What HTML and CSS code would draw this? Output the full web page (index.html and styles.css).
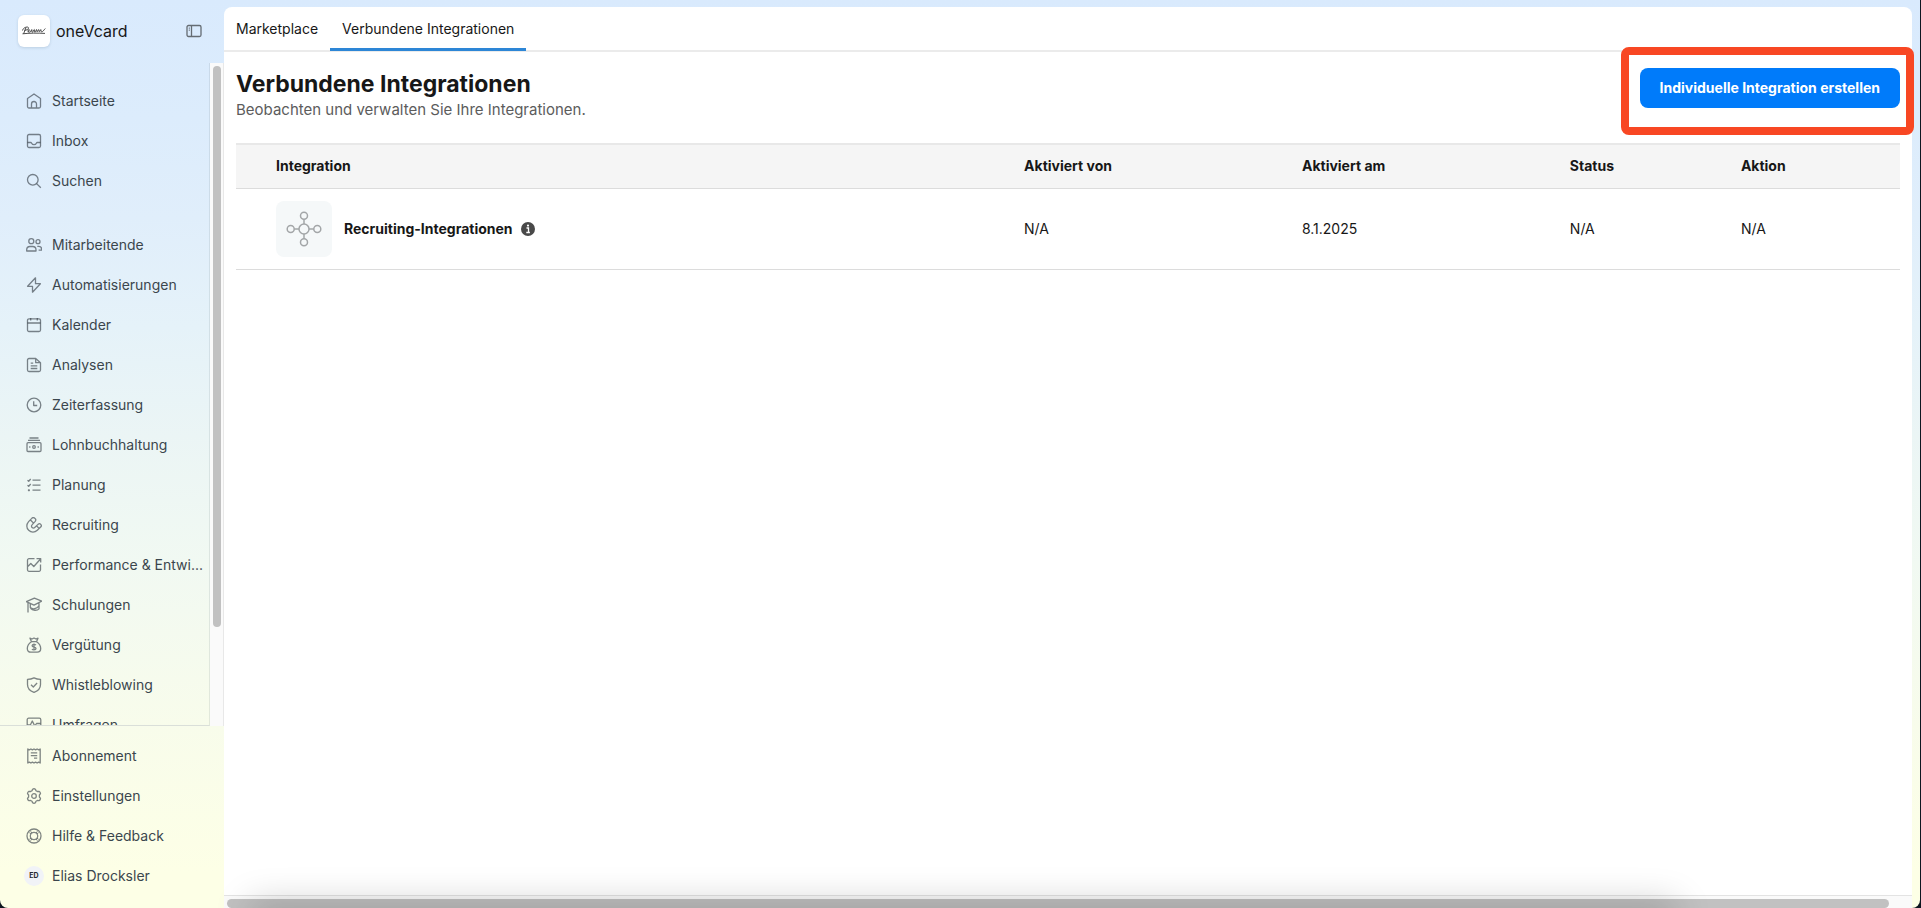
FILE: index.html
```html
<!DOCTYPE html>
<html lang="de">
<head>
<meta charset="utf-8">
<meta name="viewport" content="width=device-width, initial-scale=1">
<title>Verbundene Integrationen</title>
<link rel="stylesheet" href="styles.css">
</head>
<body>
<div class="app">
  <aside class="sidebar">
    <div class="brand">
      <span class="brand-logo">
        <svg viewBox="0 0 32 32" width="32" height="32" aria-hidden="true"><path d="M4.500 15.500c.5-3 5.500-4.500 6-2.700.3 1.400-2 2.400-4 2.600M8 12.500l-2.300 6M9.800 16.500c1.800-.6 2-2 1.100-2s-1.600 2.700.3 2.700 2-2.700 2.700-2.700c.6 0-.8 2.700.4 2.700s1.200-2.700 2-2.700-.6 2.700.6 2.700 1-2.700 1.600-2.700.1 2.300.7 2.300.9-2.300 1.500-2.300.1 2.300.7 2.300.9-2.300 1.500-2.300-.5 2.300.8 2.300 1.900-1.500 3.600-3.300M4.500 18.800c7-.8 15-.8 22.500-.4" fill="none" stroke="#222" stroke-width=".8"/></svg>
      </span>
      <span class="brand-name">oneVcard</span>
      <button class="collapse" type="button" aria-label="Seitenleiste einklappen">
        <svg viewBox="0 0 16 16" width="16" height="16"><rect x="1" y="2.500" width="14" height="11" rx="1.500"/><path d="M5.500 2.500v11M2.800 5.200h1M2.800 7.200h1"/></svg>
      </button>
    </div>
    <div class="scroll-area">
      <nav class="nav" aria-label="Hauptnavigation">
        <a class="item" href="#"><svg class="icon" viewBox="0 0 16 16"><path d="M1.500 5.500L8 1l6.500 4.500v8a1.500 1.500 0 0 1-1.500 1.500H3a1.500 1.500 0 0 1-1.500-1.500zM5.500 15v-4a2.500 2.500 0 0 1 5 0v4"/></svg><span>Startseite</span></a>
        <a class="item" href="#"><svg class="icon" viewBox="0 0 16 16"><rect x="1.500" y="1.500" width="13" height="13" rx="1.500"/><path d="M1.500 9.500h3.300c.4 0 .6.300.8.700.5 1 1.300 1.500 2.400 1.500s1.900-.5 2.400-1.500c.2-.4.4-.7.800-.7h3.300"/></svg><span>Inbox</span></a>
        <a class="item" href="#"><svg class="icon" viewBox="0 0 16 16"><circle cx="6.800" cy="6.800" r="5.300"/><path d="M10.600 10.600l4.200 4.200"/></svg><span>Suchen</span></a>
        <a class="item item-group" href="#"><svg class="icon" viewBox="0 0 16 16"><circle cx="5.300" cy="4.200" r="2.500"/><circle cx="12" cy="4.700" r="2"/><path d="M.7 14v-1.300c0-2 1.500-3.200 3.300-3.200h2.700c1.800 0 3.300 1.200 3.300 3.200V14zM11.300 9.300h1.500c1.600 0 2.800 1.100 2.800 2.900v1h-3"/></svg><span>Mitarbeitende</span></a>
        <a class="item" href="#"><svg class="icon" viewBox="0 0 16 16"><path d="M9.500.8L1.600 9.300h4.900v5.900l7.900-8.500H9.500z"/></svg><span>Automatisierungen</span></a>
        <a class="item" href="#"><svg class="icon" viewBox="0 0 16 16"><rect x="1.500" y="1.800" width="13" height="12.700" rx="1.500"/><path d="M1.500 6h13M4.700 1v2.500M11.300 1v2.500"/></svg><span>Kalender</span></a>
        <a class="item" href="#"><svg class="icon" viewBox="0 0 16 16"><path d="M9.700 1.500H3A1.500 1.500 0 0 0 1.500 3v10A1.500 1.500 0 0 0 3 14.500h10a1.500 1.500 0 0 0 1.500-1.500V5.700zM9.700 1.500v4.200h4.800M4.700 6.200h2.500M4.700 8.800h6.600M4.700 11.500h6.600"/></svg><span>Analysen</span></a>
        <a class="item" href="#"><svg class="icon" viewBox="0 0 16 16"><circle cx="8" cy="8" r="6.800"/><path d="M7.700 4.200v4.300h3.500"/></svg><span>Zeiterfassung</span></a>
        <a class="item" href="#"><svg class="icon" viewBox="0 0 16 16"><rect x="1" y="5.700" width="14" height="8.800" rx="1"/><path d="M2 3.300h12M3.500 1h9"/><circle cx="8" cy="10" r="1.300"/><path d="M3.800 9.300v1.500M12.200 9.300v1.500"/></svg><span>Lohnbuchhaltung</span></a>
        <a class="item" href="#"><svg class="icon" viewBox="0 0 16 16"><path d="M6.500 3.200h8M6.500 8.200h8M6.500 13.200h8M1.500 3.200l1.200 1.100 2-2.300M1.500 8.200l1.200 1.100 2-2.300M2.500 12.900h.8v.6h-.8z"/></svg><span>Planung</span></a>
        <a class="item" href="#"><svg class="icon" viewBox="0 0 16 16"><path d="M5.500 1.600L2.600 4.600C.2 7.300.3 11.100 2.700 13.300s6 2.300 8.600-.1l3.600-3.400a1.900 1.900 0 0 0-2.600-2.700L9 10.300c-.9.900-2.100.9-2.900.2s-.8-2 .1-2.900L9.200 4.400a2 2 0 0 0-3.700-2.800zM4.700 3.200l2.600 2.700M10.700 9l2.400 2.400"/></svg><span>Recruiting</span></a>
        <a class="item" href="#"><svg class="icon" viewBox="0 0 16 16"><path d="M8.500 1.700H3a1.500 1.500 0 0 0-1.500 1.500v9.600A1.500 1.500 0 0 0 3 14.300h10a1.500 1.500 0 0 0 1.500-1.500V7.500M1.500 9.800l3.300-3.300 3 3L14.500 2M10.500 1.600h4.200v4"/></svg><span>Performance &amp; Entwi...</span></a>
        <a class="item" href="#"><svg class="icon" viewBox="0 0 16 16"><path d="M.3 4.700L8.400 1.200l7.400 3-7.800 4zM13 6.200v5.600c-1.700 2-6.500 2-8.500-.5M2 5.500V15.500M4.300 7v3.500c2.200 2.200 6.500 1.500 8.500-1.500"/></svg><span>Schulungen</span></a>
        <a class="item" href="#"><svg class="icon" viewBox="0 0 16 16"><path d="M5.500 4.700L4 1.200l2 .8 2-1 2 1 2-.8-1.500 3.500zM5.500 4.700C3 6.300 1.300 8.700 1.300 11.500c0 2.300 1.300 3.700 3.500 3.700h6.400c2.200 0 3.500-1.400 3.500-3.700 0-2.800-1.700-5.200-4.200-6.800"/><path d="M9.900 8.200c-.4-.6-1-.8-1.900-.8-1.100 0-1.900.5-1.900 1.400 0 2 3.900.7 3.900 2.700 0 .9-.8 1.400-2 1.400-.9 0-1.600-.3-2-.9M8 6.600v7"/></svg><span>Vergütung</span></a>
        <a class="item" href="#"><svg class="icon" viewBox="0 0 16 16"><path d="M8 .8c2 1 4.300 1.500 6.500 1.500v5.200c0 3.800-2.700 6.600-6.500 7.900C4.200 14.100 1.500 11.300 1.500 7.500V2.300C3.700 2.300 6 1.800 8 .8z"/><path d="M5 7.800L7.300 10l3.800-4"/></svg><span>Whistleblowing</span></a>
        <a class="item" href="#"><svg class="icon" viewBox="0 0 16 16"><rect x="1.200" y="1.200" width="13.600" height="12" rx="1.500"/><path d="M1.500 8h2.800l2-4 2.500 5 1.700-2.500h4M5 15h6"/></svg><span>Umfragen</span></a>
      </nav>
      <div class="v-track"><div class="v-thumb"></div></div>
    </div>
    <nav class="account" aria-label="Konto">
      <a class="item" href="#"><svg class="icon" viewBox="0 0 16 16"><path d="M1.800 1l1.500.9L4.900 1l1.500.9L8 1l1.600.9 1.500-.9 1.600.9L14.200 1v14l-1.500-.9-1.600.9-1.500-.9L8 15l-1.600-.9-1.500.9-1.600-.9-1.500.9zM4.800 4.900h6.400M4.800 7.600h6.400M8 10.200h3.200"/></svg><span>Abonnement</span></a>
      <a class="item" href="#"><svg class="icon" viewBox="0 0 16 16"><path d="M6.600 1.200Q8 .3 9.400 1.200l.6 1.600 1.300.7 1.800-.2q1.300.7 1.400 2.300L13.400 7v2l1.100 1.400q-.1 1.600-1.400 2.300l-1.800-.2-1.300.7-.6 1.600q-1.400.9-2.800 0L6 13.200l-1.300-.7-1.800.2q-1.300-.7-1.400-2.300L2.600 9V7L1.500 5.600q.1-1.600 1.400-2.300l1.800.2L6 2.800z"/><circle cx="8" cy="8" r="2.300"/></svg><span>Einstellungen</span></a>
      <a class="item" href="#"><svg class="icon" viewBox="0 0 16 16"><circle cx="8" cy="8" r="7"/><circle cx="8" cy="8" r="3.700"/><path d="M3.200 4.600l1.900 1.200M4.600 3.200l1.200 1.900M12.800 4.600l-1.900 1.200M11.400 3.200l-1.200 1.900M3.200 11.400l1.900-1.200M4.600 12.800l1.200-1.900M12.800 11.400l-1.900-1.200M11.400 12.800l-1.200-1.900" stroke-width=".9"/></svg><span>Hilfe &amp; Feedback</span></a>
      <a class="item" href="#"><span class="avatar">ED</span><span>Elias Drocksler</span></a>
    </nav>
  </aside>

  <main class="main">
    <nav class="tabs" aria-label="Integrationen">
      <a class="tab" href="#">Marketplace</a>
      <a class="tab tab-active" href="#" aria-current="page">Verbundene Integrationen</a>
    </nav>
    <div class="content">
      <header class="page-head">
        <div>
          <h1 class="title">Verbundene Integrationen</h1>
          <p class="subtitle">Beobachten und verwalten Sie Ihre Integrationen.</p>
        </div>
        <div class="cta-wrap">
          <button class="cta" type="button">Individuelle Integration erstellen</button>
          <div class="highlight"></div>
        </div>
      </header>
      <table class="table">
        <thead>
          <tr><th class="col-name">Integration</th><th class="col-by">Aktiviert von</th><th class="col-date">Aktiviert am</th><th class="col-status">Status</th><th>Aktion</th></tr>
        </thead>
        <tbody>
          <tr>
            <td class="col-name">
              <div class="integration">
                <span class="tile"><svg viewBox="0 0 36 36" width="36" height="36" fill="none" stroke="#a3a6a8" stroke-width="1.500" aria-hidden="true"><circle cx="18" cy="18" r="5"/><circle cx="18" cy="4.700" r="3.500"/><circle cx="18" cy="31.300" r="3.500"/><circle cx="4.700" cy="18" r="3.500"/><circle cx="31.300" cy="18" r="3.500"/><path d="M18 8.200V13M18 23v4.800M8.200 18H13M23 18h4.800"/></svg></span>
                <span class="integration-name">Recruiting-Integrationen</span>
                <svg class="info" viewBox="0 0 14 14" width="14" height="14" role="img" aria-label="Info"><circle cx="7" cy="7" r="7" fill="#494949"/><path d="M5.500 6h2v4.500M5.300 10.500h3.600" stroke="#fff" stroke-width="1.300" fill="none"/><circle cx="7" cy="3.600" r="1.100" fill="#fff"/></svg>
              </div>
            </td>
            <td>N/A</td><td>8.1.2025</td><td>N/A</td><td>N/A</td>
          </tr>
        </tbody>
      </table>
    </div>
    <div class="h-track"><div class="h-thumb"></div></div>
    <div class="bottom-shade"></div>
  </main>
</div>
</body>
</html>
```
FILE: styles.css
```css
* { box-sizing: border-box; }

body {
  margin: 0;
  background: #0d1620;
  color: #171717;
  font: 14px/20px Inter, "Liberation Sans", sans-serif;
}

a { color: inherit; text-decoration: none; }

.app {
  display: flex;
  height: 100vh;
  margin-right: 1px;
  padding: 7px 8px 0 0;
  overflow: hidden;
  border-radius: 0 0 8px 8px;
  background: linear-gradient(#d9eafd 0%, #dcecfc 13%, #e0eefb 24%, #e5f2f9 36%, #ebf5f5 48%, #f1f9f2 62%, #f8fceb 80%, #fdffe6 96%);
}

.sidebar {
  display: flex;
  flex: none;
  flex-direction: column;
  width: 224px;
}

.brand {
  display: flex;
  flex: none;
  align-items: center;
  gap: 6px;
  height: 56px;
  padding: 0 22px 8px 18px;
}

.brand-logo {
  width: 32px;
  height: 32px;
  border-radius: 6px;
  background: #fff;
  box-shadow: 0 1px 3px rgba(30, 60, 90, 0.16);
}

.brand-name { flex: 1; font-size: 16px; }

.collapse {
  display: flex;
  padding: 0;
  border: 0;
  background: none;
}

.collapse svg { fill: none; stroke: #656c73; stroke-width: 1.3; }

.scroll-area {
  display: flex;
  flex: 1;
  min-height: 0;
}

.nav {
  flex: 1;
  min-width: 0;
  padding: 18px 4px 0 26px;
  overflow: hidden;
  border-right: 1px solid rgba(90, 110, 120, 0.14);
  border-bottom: 1px solid #dadfd9;
}

.item {
  display: flex;
  align-items: center;
  gap: 10px;
  height: 40px;
  color: #3b464d;
}

.item span:last-child { white-space: nowrap; }

.item-group { margin-top: 24px; }

.icon {
  flex: none;
  width: 16px;
  height: 16px;
  fill: none;
  stroke: rgba(50, 58, 66, 0.62);
  stroke-width: 1.3;
  stroke-linejoin: round;
}

.v-track {
  width: 14px;
  padding: 3px 2px 0 3px;
  border-right: 1px solid #e8e8e8;
  background: #fafafa;
}

.v-thumb {
  height: 85%;
  border-radius: 4px;
  background: #c1c1c1;
}

.account { flex: none; padding: 10px 12px 12px 26px; }

.avatar {
  flex: none;
  width: 20px;
  margin: 0 -2px;
  border-radius: 10px;
  background: #f1f3f7;
  color: #262a2e;
  font-size: 7px;
  font-weight: 700;
  text-align: center;
}

.main {
  position: relative;
  display: flex;
  flex: 1;
  flex-direction: column;
  min-width: 0;
  border-radius: 8px 8px 0 0;
  background: #fff;
}

.tabs {
  display: flex;
  flex: none;
  height: 45px;
  border-bottom: 2px solid #ebebeb;
}

.tab {
  height: 44px;
  padding: 12px 12px 0;
}

.tab-active { border-bottom: 3px solid #2d86d6; }

.content { flex: 1; padding: 16px 12px 0; }

.page-head {
  display: flex;
  justify-content: space-between;
  height: 75px;
}

.title {
  margin: 0;
  font-size: 23px;
  font-weight: 700;
  line-height: 32px;
}

.subtitle {
  margin: 0;
  color: #5c5c5c;
  font-size: 15px;
  line-height: 20px;
}

.cta-wrap { position: relative; }

.cta {
  height: 40px;
  padding: 0 20px;
  border: 0;
  border-radius: 8px;
  background: #007bfa;
  color: #fff;
  font: 700 14px/20px Inter, "Liberation Sans", sans-serif;
}

.highlight {
  position: absolute;
  inset: -21px -14px auto -19px;
  height: 88px;
  border: 8px solid #f84723;
  border-radius: 8px;
  pointer-events: none;
}

.table {
  width: 100%;
  border-collapse: collapse;
  table-layout: fixed;
}

.table th {
  height: 44px;
  padding: 0;
  border-top: 2px solid #e8e8e8;
  border-bottom: 1px solid #dcdcdc;
  background: #f5f5f5;
  font-weight: 700;
  text-align: left;
}

.table td {
  height: 81px;
  padding: 0;
  border-bottom: 1px solid #dcdcdc;
}

.table .col-name { width: 47.36%; padding-left: 40px; }
.col-by { width: 16.7%; }
.col-date { width: 16.1%; }
.col-status { width: 10.28%; }

.integration { display: flex; align-items: center; }

.tile {
  display: flex;
  align-items: center;
  justify-content: center;
  width: 56px;
  height: 56px;
  margin-right: 12px;
  border-radius: 8px;
  background: #f5f8f9;
}

.integration-name { margin-right: 8px; font-weight: 700; }

.h-track {
  flex: none;
  height: 13px;
  padding: 3px 23px 1px 3px;
  border-top: 1px solid #e3e3e3;
  background: #fafafa;
}

.h-thumb {
  height: 9px;
  border-radius: 5px;
  background: #c1c1c1;
}

.bottom-shade {
  position: absolute;
  right: 240px;
  bottom: -20px;
  left: 30px;
  height: 20px;
  box-shadow: 0 0 36px 4px rgba(0, 0, 0, 0.22);
  pointer-events: none;
}
```
